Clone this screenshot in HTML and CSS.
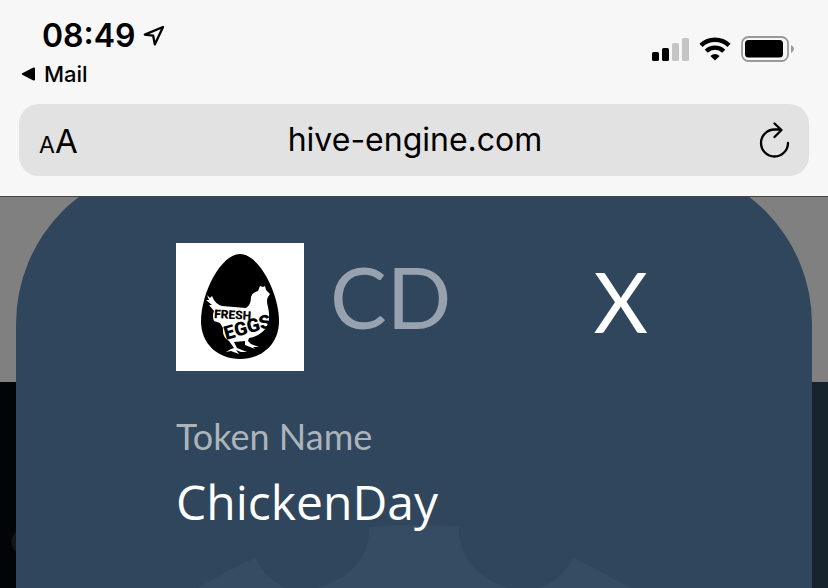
FILE: index.html
```html
<!DOCTYPE html>
<html lang="en">
<head>
<meta charset="utf-8">
<meta name="viewport" content="width=device-width, initial-scale=1">
<title>hive-engine.com</title>
<link rel="stylesheet" href="styles.css">
</head>
<body>
<header class="browser">
  <div class="status">
    <div class="status-left">
      <div class="clock">
        <time>08:49</time>
        <svg width="22" height="22" viewBox="0 0 22 22" aria-hidden="true"><path d="M20 2 1.800 9.600 10.200 10.700 11.800 19.400Z" fill="none" stroke="#000" stroke-width="2.300" stroke-linejoin="round"/></svg>
      </div>
      <a class="back" href="#">
        <svg width="15" height="14" viewBox="0 0 15 14" aria-hidden="true"><path d="M1.300 6.200 12.400.5Q14 0 14 1.700V12.300Q14 14 12.400 13.500L1.300 7.800Q0 7 1.300 6.200Z"/></svg>
        Mail
      </a>
    </div>
    <div class="indicators">
      <svg width="37" height="24" viewBox="0 0 37 24" aria-hidden="true"><rect y="15" width="7" height="9" rx="1.6"/><rect x="10" y="11" width="7" height="13" rx="1.6"/><g fill="#c5c5c5"><rect x="20" y="6" width="7" height="18" rx="1.6"/><rect x="30" y="1" width="7" height="23" rx="1.6"/></g></svg>
      <svg width="32" height="24" viewBox="0 0 32 24" aria-hidden="true"><g fill="none" stroke="#000" stroke-width="4.4"><path d="M2 8.400A20 20 0 0 1 30 8.400"/><path d="M7.300 14.200A12.400 12.400 0 0 1 24.700 14.200"/></g><path d="M11.400 19Q16 15 20.600 19L16 23.600Z"/></svg>
      <svg width="53" height="26" viewBox="0 0 53 26" aria-hidden="true"><rect x="1" y="1" width="46" height="24" rx="6.5" fill="none" stroke="#999" stroke-width="1.8"/><rect x="4" y="4" width="38" height="17.5" rx="3.5"/><path d="M50 9Q53 10.500 53 13T50 17Z" fill="#999"/></svg>
    </div>
  </div>
  <form class="address">
    <button type="button" class="text-size" aria-label="Text size"><span class="small-a">A</span><span class="big-a">A</span></button>
    <input type="text" value="hive-engine.com" aria-label="Address">
    <button type="button" class="reload" aria-label="Reload">
      <svg width="32" height="38" viewBox="0 0 32 38"><path d="M29 22A13.500 13.500 0 1 1 15.500 8.500H21M15.500 2.500 22.500 9 15.500 16" fill="none" stroke="#000" stroke-width="2.300" stroke-linecap="round" stroke-linejoin="round"/></svg>
    </button>
  </form>
</header>
<main class="page">
  <section class="card">
    <svg class="gear" width="460" height="64" viewBox="0 0 460 64" aria-hidden="true"><path d="M14 64Q42 47 71 34Q83 56 102 64H134C170 52 186 31 185 3Q230-1 275 3C274 31 292 54 324 64H356Q378 55 389 34Q417 47 446 64Z" fill="#364c62"/></svg>
    <div class="token-head">
      <svg class="logo" width="128" height="128" viewBox="0 0 128 128" role="img" aria-label="Fresh Eggs">
        <rect width="128" height="128" fill="#fff"/>
        <path d="M64 11C83 11 103 50 103 78C103 101 86 116 64 116S25 101 25 78C25 50 45 11 64 11Z"/>
        <path d="M31 52 34 55 36 53Q39 61 46 63L70 65Q75 62 75 54Q77 49 82 48L84 43 87 44 89 43 90 47 94 51 92 54Q90 57 92 64Q95 77 90 85Q84 93 73 95L72 98 75 101 83 104 77 104 79 106 69 102 69 98 58 99 61 105 71 109 65 109 60 107 63 111 55 108 50 109 55 106 58 105 53 98Q46 94 47 85L44 80 38 78Q36 73 38 68L33 62 36 62 30 57 33 57Z" fill="#fff"/>
        <g font-family="Roboto, sans-serif" font-weight="900">
          <text x="38" y="75" font-size="12" transform="rotate(3 38 75)">FRESH</text>
          <text x="50" y="97" font-size="19" transform="rotate(-16 50 97)">EGGS</text>
        </g>
      </svg>
      <h1>CD</h1>
      <button type="button" class="close">X</button>
    </div>
    <dl>
      <dt>Token Name</dt>
      <dd>ChickenDay</dd>
    </dl>
  </section>
</main>
</body>
</html>
```
FILE: styles.css
```css
* { box-sizing: border-box; }
body {
  margin: 0;
  min-height: 100vh;
  display: flex;
  flex-direction: column;
  font-family: Inter, sans-serif;
  color: #000;
  background: #f7f7f7;
}
svg { display: block; flex: none; }
button { padding: 0; border: 0; background: none; color: inherit; font-family: inherit; }
.browser { padding: 16px 19px 20px; background: #f7f7f7; }
.status { display: flex; justify-content: space-between; height: 88px; padding: 0 15px 0 2px; }
.clock { display: flex; align-items: center; gap: 7px; padding-left: 21px; font-size: 32px; font-weight: 600; line-height: 40px; }
.back { display: flex; align-items: center; gap: 8px; color: #000; font-size: 22px; font-weight: 500; line-height: 36px; text-decoration: none; }
.indicators { display: flex; align-items: center; gap: 10px; height: 66px; }
.address {
  display: flex;
  align-items: center;
  height: 72px;
  margin: 0;
  padding: 0 18px 0 20px;
  border-radius: 20px;
  background: #e2e2e2;
}
.text-size { display: flex; align-items: baseline; width: 32px; padding-top: 5px; line-height: 40px; }
.small-a { font-size: 23px; }
.big-a { font-size: 33px; }
.address input {
  flex: 1;
  min-width: 0;
  padding: 0;
  border: 0;
  background: none;
  color: #000;
  font: 32px/40px Inter, sans-serif;
  text-align: center;
}
.page {
  flex: 1;
  display: flex;
  padding: 0 16px;
  overflow: hidden;
  border-top: 1px solid #444;
  background:
    radial-gradient(circle at 24px 345px, #14161a 12px, transparent 13px),
    linear-gradient(#808080, #808080) 0 0 / 100% 185px no-repeat,
    linear-gradient(90deg, #020508, #17242d);
}
.card {
  position: relative;
  flex: 1;
  margin-top: -33px;
  padding: 79px 160px 32px;
  border-radius: 160px 160px 0 0;
  background: #2f465c;
  color: #fff;
}
.gear { position: absolute; bottom: 0; left: 50%; margin-left: -230px; }
.token-head { position: relative; display: flex; align-items: flex-start; }
h1 { flex: 1; margin: 0 0 0 26px; color: #97a2ae; font: 85px/106px Lato, sans-serif; }
.close { margin-right: 4px; font: 84px/116px Lato, sans-serif; }
dl { position: relative; margin: 43px 0 0; }
dt { color: #acb3bb; font: 36px/44px Lato, sans-serif; }
dd { margin: 8px 0 0; font: 48px/72px "Open Sans", sans-serif; }
```
